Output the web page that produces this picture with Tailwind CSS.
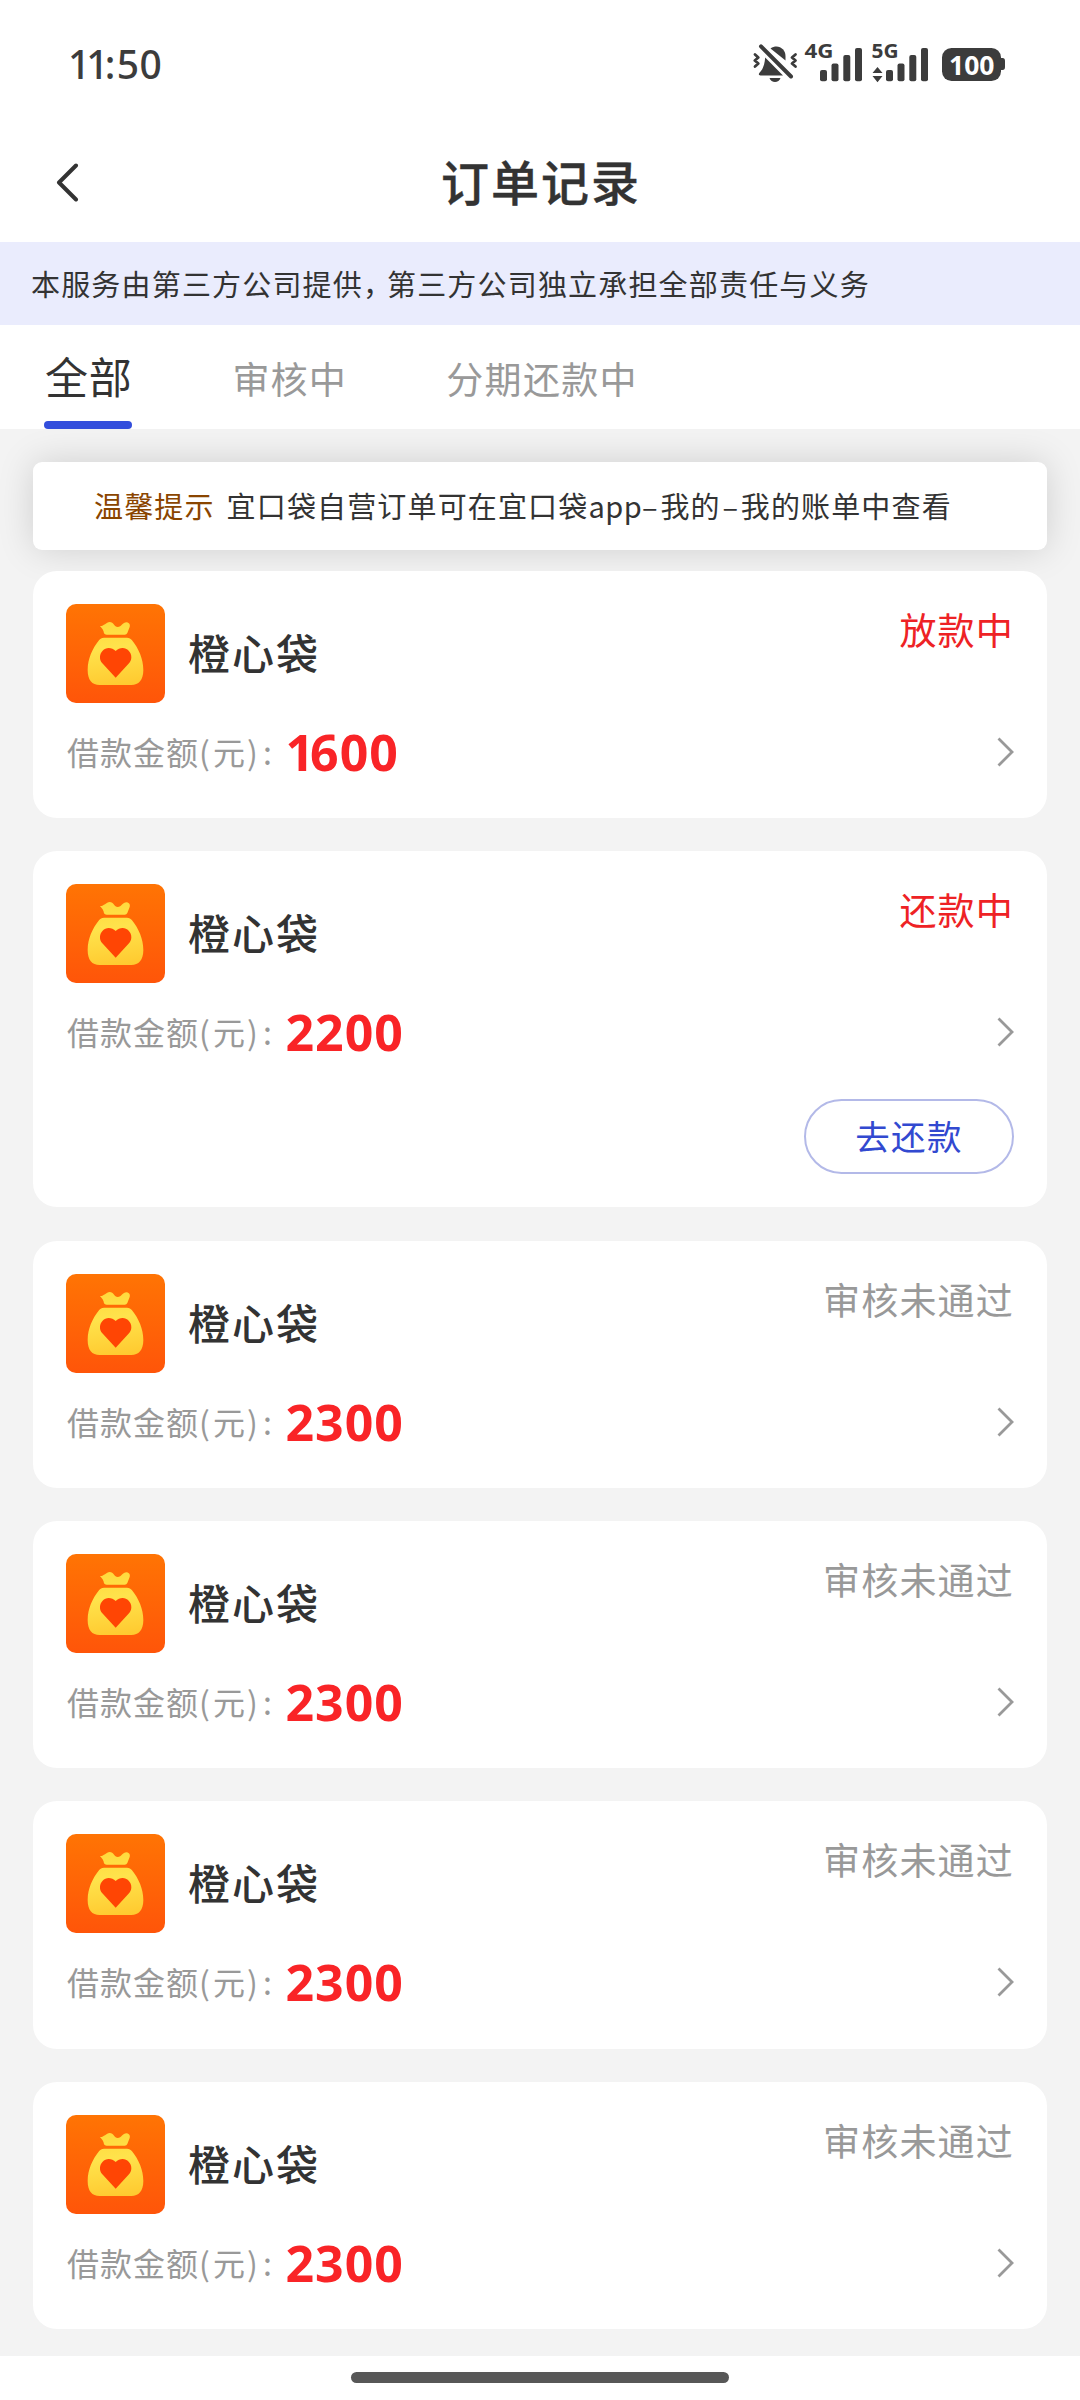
<!DOCTYPE html>
<html lang="zh-CN">
<head>
<meta charset="utf-8">
<title>订单记录</title>
<script src="https://cdn.jsdelivr.net/npm/@tailwindcss/browser@4"></script>
</head>
<body class="bg-white">
<div class="flex h-[2400px] w-[1080px] flex-col overflow-hidden bg-white font-['Noto_Sans_CJK_SC',sans-serif] text-[#333]">

  <!-- status bar -->
  <div class="flex h-[124px] shrink-0 items-center justify-between pt-[2px] pr-[75px] pl-[68px] text-[#3c3c3c]">
    <span class="flex pt-px font-['Noto_Sans',sans-serif] text-[39px] leading-none font-medium"><span class="tracking-[-4px]">11</span><span class="tracking-[1.500px]">:</span><span class="tracking-[0.500px]">50</span></span>
    <svg class="h-[40px] w-[253px] overflow-visible" viewBox="752 42 253 40" fill="#3c3c3c">
      <path d="M770.5 47.5C778 42.500 785.500 48 785.500 55V59.500Z"/>
      <path d="M765.200 56.500L783 74.500H760.500C758.500 74.500 758.500 73 759.500 71.700C763 68 764.500 64 765.200 56.500Z"/>
      <path d="M769.500 77H780.500C779 82.300 771 82.300 769.500 77Z"/>
      <g fill="none" stroke="#3c3c3c" stroke-linecap="round" stroke-linejoin="round">
        <path d="M761 45.300L791 75.500" stroke-width="4"/>
        <path d="M755 53.500L758.300 56.500L754.800 59.500L758.300 62.500L755 65.500" stroke-width="2.800"/>
        <path d="M795.500 53.500L792 56.500L795.500 59.500L792 62.500L795.500 65.500" stroke-width="2.800"/>
      </g>
      <text x="804.500" y="57" font-family="Noto Sans" font-size="19" font-weight="700" textLength="29" lengthAdjust="spacingAndGlyphs">4G</text>
      <text x="871.500" y="57" font-family="Noto Sans" font-size="19" font-weight="700" textLength="27" lengthAdjust="spacingAndGlyphs">5G</text>
      <rect x="820" y="69" width="7" height="11.300" rx="2"/><rect x="831.500" y="62.500" width="7" height="17.800" rx="2"/><rect x="843.300" y="54" width="7" height="26.300" rx="2"/><rect x="855" y="47" width="7" height="33.300" rx="2"/>
      <rect x="886" y="69" width="7" height="11.300" rx="2"/><rect x="897.500" y="62.500" width="7" height="17.800" rx="2"/><rect x="909.300" y="54" width="7" height="26.300" rx="2"/><rect x="921" y="47" width="7" height="33.300" rx="2"/>
      <path d="M877.500 66L882.500 72H872.500ZM872.500 75H882.500L877.500 81.300Z"/>
      <rect x="942" y="47" width="59" height="33" rx="9.500"/>
      <path d="M1001 57H1002.500Q1005 57 1005 60V66Q1005 69 1002.500 69H1001Z"/>
      <text x="949" y="73.500" font-family="Noto Sans" font-size="26.500" font-weight="700" fill="#fff" textLength="45.500">100</text>
    </svg>
  </div>

  <!-- title bar -->
  <div class="grid h-[118px] shrink-0 grid-cols-[1fr_auto_1fr] items-center">
    <svg class="ml-[56px] h-[40px] w-[24px]" viewBox="0 0 24 40" fill="none" stroke="#333" stroke-width="4" stroke-linecap="round" stroke-linejoin="round"><path d="M20 2.500L3 19.500L20 36.500"/></svg>
    <h1 class="pb-[6px] pl-[2px] text-[48px] leading-none font-medium tracking-[2px] [-webkit-text-stroke:0.4px_#333]">订单记录</h1>
  </div>

  <!-- service notice -->
  <div class="flex h-[82.500px] shrink-0 items-center bg-[#eaecfd] pl-[31px] text-[29px] leading-none tracking-[1.180px]">
    <span>本服务由第三方公司提供</span><span class="w-[24px] [font-feature-settings:'halt']">，</span><span>第三方公司独立承担全部责任与义务</span>
  </div>

  <!-- tabs -->
  <div class="flex h-[104.500px] shrink-0 pl-[44px]">
    <div class="flex w-[88px] flex-col justify-between pt-[29px]">
      <span class="pl-[1px] text-[43px] leading-none tracking-[0.800px] whitespace-nowrap">全部</span>
      <i class="h-[8px] rounded-full bg-[#334edc]"></i>
    </div>
    <span class="ml-[100.500px] pt-[35px] text-[37px] leading-none tracking-[1.100px] text-[#999]">审核中</span>
    <span class="ml-[99.500px] pt-[35px] text-[37px] leading-none tracking-[1.300px] text-[#999]">分期还款中</span>
  </div>

  <!-- order list -->
  <main class="h-[1927px] shrink-0 overflow-hidden bg-[#f3f3f3] px-[33px] pt-[33px]">
    <div class="flex h-[88px] items-center rounded-[9px] bg-white pb-[1px] pl-[61px] text-[29px] leading-none tracking-[1.150px] shadow-[0_0_36px_rgba(0,0,0,0.15)]">
      <span class="mr-[12px] text-[#8a4500]">温馨提示</span>
      <span>宜口袋自营订单可在宜口袋</span><span class="w-[52px] tracking-[0.500px]">app</span><span class="w-[20px] text-center">–</span><span>我的</span><span class="w-[20px] text-center">–</span><span>我的账单中查看</span>
    </div>
    <div id="orders" class="relative mt-[21px] flex flex-col gap-[33.120px]"></div>
  </main>

  <!-- gesture bar -->
  <div class="flex shrink-0 justify-center pt-[16px]"><i class="h-[11px] w-[378px] rounded-full bg-[#575757]"></i></div>
</div>

<svg class="absolute h-0 w-0">
  <defs>
    <linearGradient id="tile" x1="0" y1="0" x2="0" y2="1"><stop offset="0" stop-color="#ff7404"/><stop offset="1" stop-color="#ff5509"/></linearGradient>
    <linearGradient id="gold" gradientUnits="userSpaceOnUse" x1="135" y1="54" x2="160" y2="243"><stop offset="0" stop-color="#ffd93c"/><stop offset=".4" stop-color="#ffe34c"/><stop offset="1" stop-color="#ffca30"/></linearGradient>
  </defs>
</svg>

<script>
  const orders = [
    { amount: '1600', status: '放款中', active: true },
    { amount: '2200', status: '还款中', active: true, repay: true },
    { amount: '2300', status: '审核未通过' },
    { amount: '2300', status: '审核未通过' },
    { amount: '2300', status: '审核未通过' },
    { amount: '2300', status: '审核未通过' },
  ];
  document.getElementById('orders').innerHTML = orders.map(o => `
    <section class="rounded-[24px] bg-white px-[33px] pt-[33px] pb-[33px]">
      <div class="flex h-[99px]">
        <svg class="h-[99px] w-[99px] rounded-[10px]" viewBox="0 0 297 297">
          <rect width="297" height="297" fill="url(#tile)"/>
          <path fill="url(#gold)" d="M102 66C112 68 120 55 131 54C143 54 145 69 155 69C167 69 169 55 182 55C191 56 193 64 191 69L184 87Q182 92 176 92H122Q116 92 114 88C113 78 108 73 102 66Z"/>
          <path fill="url(#gold)" d="M114 101H183C190 101 194 104 198 109C218 134 232 165 232 198C232 228 218 243 196 243H101C78 243 65 228 65 198C65 165 79 134 99 109C103 104 107 101 114 101Z"/>
          <path fill="#ff4504" d="M149 141C160 130 178 129 188 140C199 151 198 168 189 178L149 221L109 178C100 168 99 151 110 140C120 129 138 130 149 141Z"/>
        </svg>
        <h2 class="ml-[23px] pt-[27px] text-[42px] leading-none font-medium tracking-[2px]">橙心袋</h2>
        <span class="ml-auto pt-[7px] text-[37px] leading-none tracking-[1.200px] ${o.active ? 'text-[#ee2225]' : 'text-[#999]'}">${o.status}</span>
      </div>
      <div class="mt-[26px] flex h-[46px] items-center text-[#999]">
        <span class="flex w-[219.500px] pb-[2px] pl-[1px] text-[32px] leading-none tracking-[1px]">借款金额<span class="w-[14px] tracking-normal">(</span>元<span class="ml-[1px] w-[15px] tracking-normal">)</span><span class="ml-[1px]">:</span></span>
        <b class="flex font-['Noto_Sans',sans-serif] text-[50px] leading-none font-bold tracking-[1px] text-[#f92427]"><span class="${o.amount[0] === '1' ? 'tracking-[-4px]' : ''}">${o.amount[0]}</span>${o.amount.slice(1)}</b>
        <svg class="ml-auto h-[30px] w-[17px]" viewBox="0 0 17 30" fill="none" stroke="#999" stroke-width="2.800"><path d="M1.500 1.500L15 15L1.500 28.500"/></svg>
      </div>
      <div class="h-[10.300px]"></div>
      ${o.repay ? '<div class="mt-[33.700px] flex justify-end"><button class="h-[75px] w-[210px] rounded-[38px] border-2 border-[#b3b9e8] pb-[4px] text-[34.500px] leading-none tracking-[1.300px] text-[#3249d0]">去还款</button></div>' : ''}
    </section>`).join('');
</script>
</body>
</html>
